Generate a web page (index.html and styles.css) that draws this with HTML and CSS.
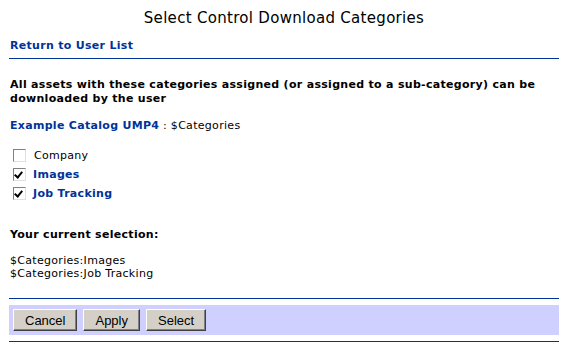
FILE: index.html
```html
<!DOCTYPE html>
<html>
<head>
    <title>Select Control Download Categories</title>
    <link rel="stylesheet" href="styles.css">
</head>
<body>
    <h1 class="page-title">Select Control Download Categories</h1>

    <a href="#" class="nav-link">Return to User List</a>
    <hr class="rule">

    <p class="intro">All assets with these categories assigned (or assigned to a sub-category) can be downloaded by the user</p>

    <p class="catalog"><a href="#" class="catalog-link">Example Catalog UMP4</a> : $Categories</p>

    <ul class="category-list">
        <li class="category"><span class="box"></span><span class="cat-plain">Company</span></li>
        <li class="category"><span class="box checked"></span><a href="#" class="cat-link">Images</a></li>
        <li class="category"><span class="box checked"></span><a href="#" class="cat-link">Job Tracking</a></li>
    </ul>

    <p class="selection-title">Your current selection:</p>
    <div class="selection">
        <div>$Categories:Images</div>
        <div>$Categories:Job Tracking</div>
    </div>

    <hr class="rule rule-bottom">
    <div class="button-bar">
        <button class="btn">Cancel</button>
        <button class="btn">Apply</button>
        <button class="btn">Select</button>
    </div>
    <hr class="rule rule-end">
</body>
</html>
```

FILE: styles.css
```css
body {
    font-family: "DejaVu Sans", Verdana, sans-serif;
    font-size: 11px;
    letter-spacing: 0.3px;
    color: #000;
    background: #fff;
    margin: 0;
    padding: 0 8px 0 9px;
}
.page-title {
    font-size: 15px;
    font-weight: normal;
    text-align: center;
    margin: 0;
    padding-top: 9px;
    height: 30px;
    line-height: 18px;
}
.nav-link {
    display: block;
    margin-left: 1px;
    font-weight: bold;
    color: #003399;
    text-decoration: none;
    line-height: 14px;
}
.rule {
    border: none;
    border-top: 1px solid #003399;
    margin: 5px 0 0 0;
    height: 0;
}
.intro {
    font-weight: bold;
    margin: 19px 0 0 1px;
    line-height: 14px;
}
.catalog {
    margin: 13px 0 0 1px;
    line-height: 14px;
}
.catalog-link {
    color: #003399;
    font-weight: bold;
    text-decoration: none;
}
.category-list {
    list-style: none;
    margin: 13px 0 0 4px;
    padding: 0;
}
.category {
    display: flex;
    align-items: center;
    height: 19px;
}
.box {
    width: 11px;
    height: 11px;
    border-top: 1px solid #808080;
    border-left: 1px solid #808080;
    border-right: 1px solid #e0e0e0;
    border-bottom: 1px solid #e0e0e0;
    background: #fff;
    margin-right: 7px;
    position: relative;
}
.box.checked::after {
    content: "";
    position: absolute;
    left: 2px;
    top: 1px;
    width: 3px;
    height: 6px;
    border-right: 2px solid #000;
    border-bottom: 2px solid #000;
    transform: rotate(40deg);
}
.cat-plain {
    margin-left: 1px;
}
.cat-link {
    color: #003399;
    font-weight: bold;
    text-decoration: none;
}
.selection-title {
    font-weight: bold;
    margin: 25px 0 0 1px;
    line-height: 14px;
}
.selection {
    margin: 12px 0 0 1px;
    line-height: 13px;
}
.rule-bottom {
    margin-top: 18px;
}
.button-bar {
    background: #cfd0ff;
    margin-top: 6px;
    height: 30px;
    display: flex;
    align-items: center;
    gap: 6px;
    padding-left: 4px;
}
.btn {
    font-family: "Liberation Sans", Arial, sans-serif;
    font-size: 13px;
    letter-spacing: 0;
    background: #d4d0c8;
    color: #000;
    height: 22px;
    padding: 0 11px;
    border: 1px solid;
    border-color: #fff #404040 #404040 #fff;
    box-shadow: inset -1px -1px 0 #808080;
    border-radius: 0;
}
.rule-end {
    margin-top: 6px;
}
```
